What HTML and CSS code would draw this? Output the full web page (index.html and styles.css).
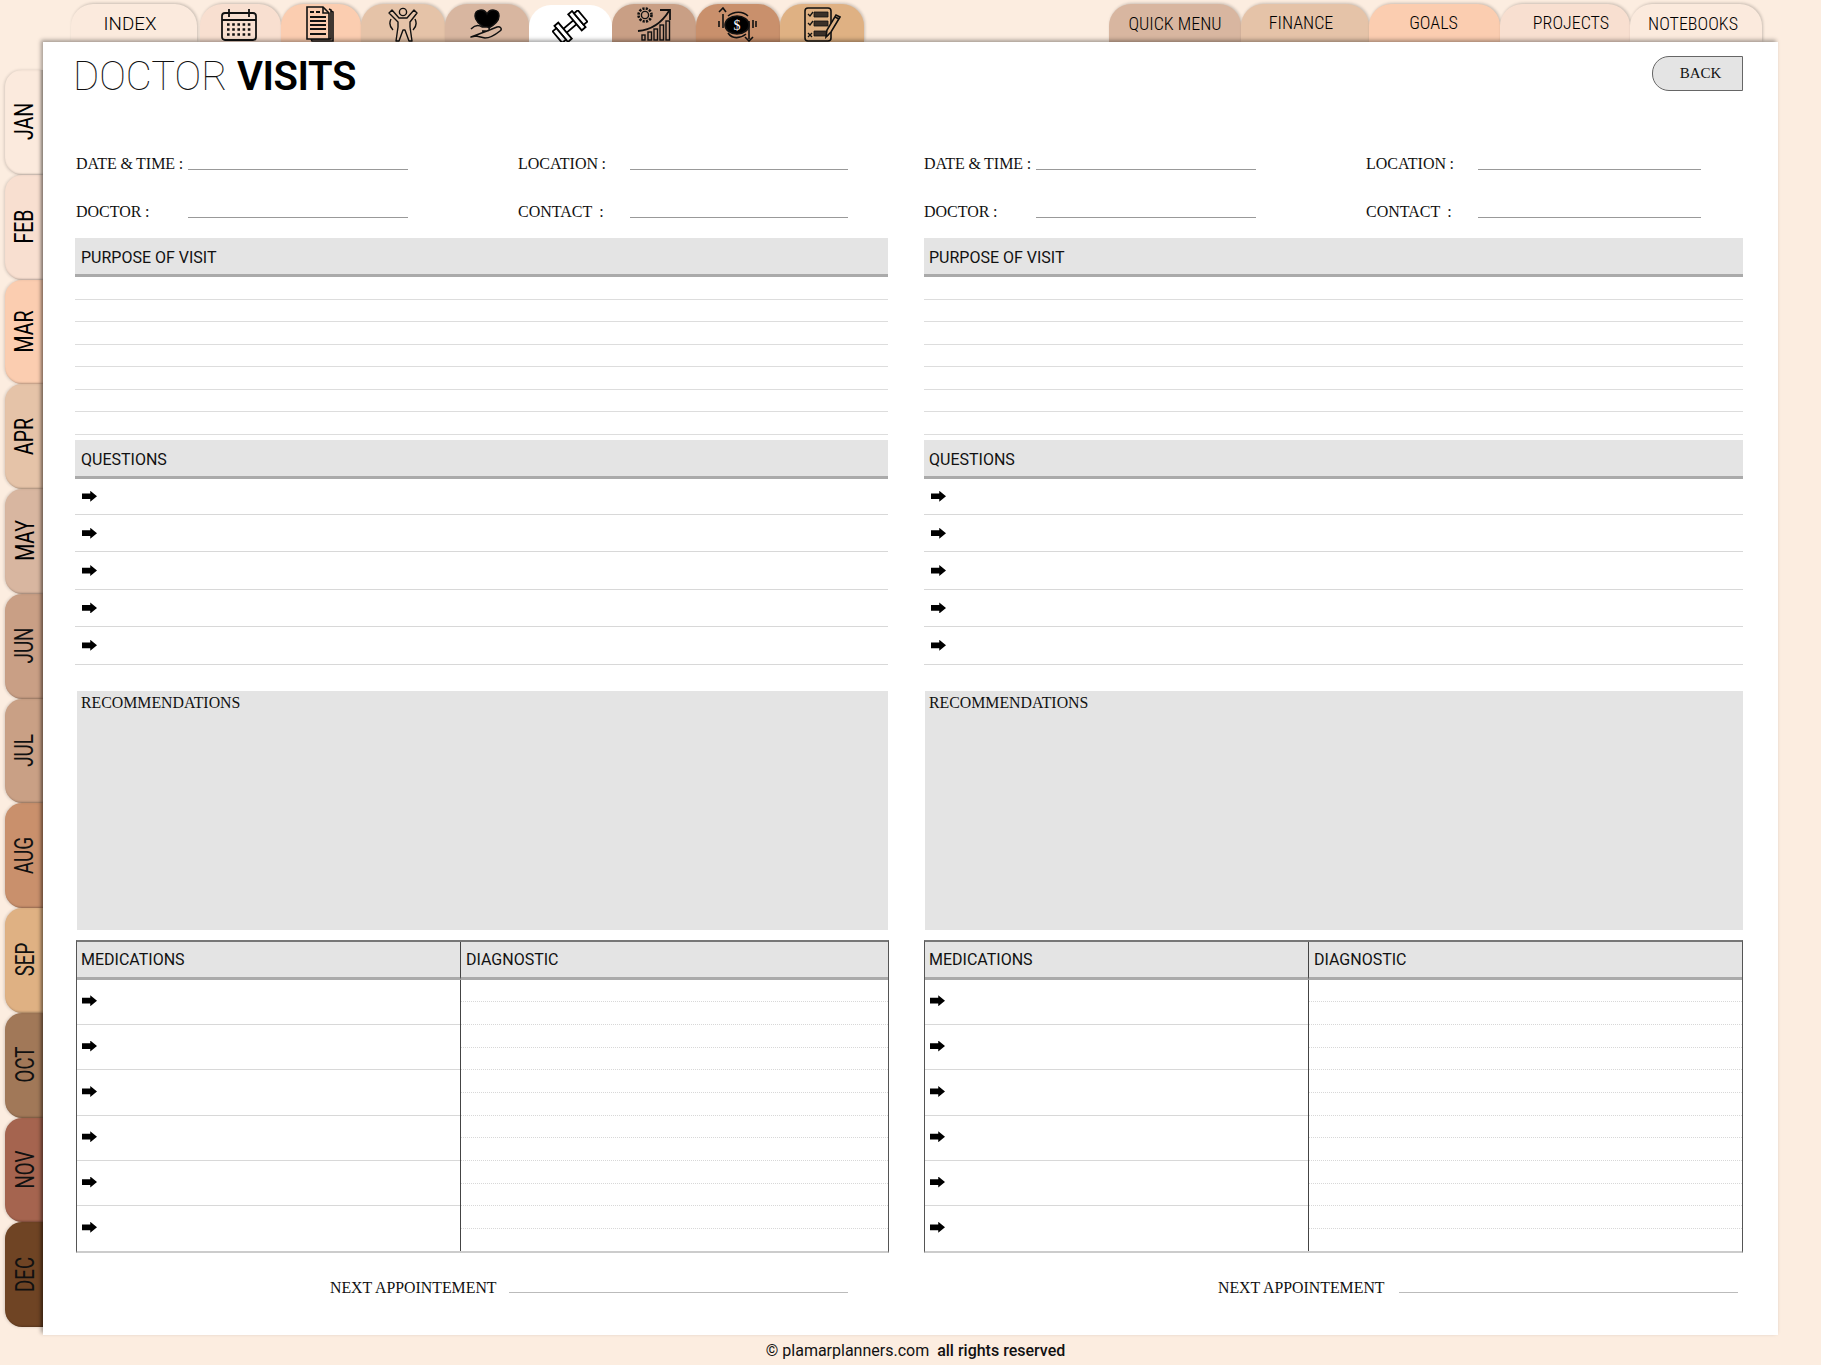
FILE: index.html
```html
<!DOCTYPE html>
<html lang="en">
<head>
  <meta charset="UTF-8">
  <meta name="viewport" content="width=device-width, initial-scale=1.0">
  <title>Doctor Visits</title>
  <link rel="stylesheet" href="styles.css">
</head>
<body>

  <div class="page">

    <nav class="topbar">
      <div class="tabs">
        <a class="tab tab-index c1">INDEX</a>
        <a class="tab tab-icon c2">
          <svg width="36" height="33" viewBox="0 0 36 33" fill="none" stroke="#111" stroke-width="1.8">
            <rect x="1" y="5" width="34" height="27" rx="3"/>
            <path d="M1 12h34M8 1v8M28 1v8"/>
            <g stroke-width="2.6" stroke-dasharray="2.6 2.6">
              <path d="M6 16.5h25M6 21.5h25M6 26.5h25"/>
            </g>
          </svg>
        </a>
        <a class="tab tab-icon c3">
          <svg width="28" height="36" viewBox="0 0 28 36" fill="none" stroke="#111" stroke-width="1.6">
            <path d="M25 5l2 1v29H6l-1-2"/>
            <path d="M23 3l2 1v29H5"/>
            <path d="M1 1h16l6 6v26H1z" fill="#fbcdb0"/>
            <path d="M17 1v6h6"/>
            <path d="M4 6h4M10 6h4M4 11h16M4 15h16M4 19h16M4 23h16M4 28h16" stroke-width="1.8"/>
          </svg>
        </a>
        <a class="tab tab-icon c4">
          <svg width="30" height="35" viewBox="0 0 30 35" fill="none" stroke="#111" stroke-width="1.4">
            <circle cx="15" cy="5" r="3.6"/>
            <path d="M1 6l3-3 7 8h8l7-8 3 3-7 9v5l2 14h-3l-4-11-2 0-4 11H8l2-14v-5z" stroke-linejoin="round"/>
            <path d="M3 12c-2 4-1 8 2 11M27 12c2 4 1 8-2 11"/>
          </svg>
        </a>
        <a class="tab tab-icon c5">
          <svg width="33" height="30" viewBox="0 0 33 30" fill="none" stroke="#111" stroke-width="1.5">
            <path d="M17 20C8 15 5 11 5 7c0-7 9-8 12-2 3-6 12-5 12 2 0 4-4 9-12 13z" fill="#000"/>
            <path d="M1 20c4-4 8-4 11-2h5c3 0 3 4 0 4h-5M17 22l10-4c3-1 6 2 3 4-5 4-10 7-15 7l-9-2-5 1z" stroke-linejoin="round" fill="#d8b6a0"/>
          </svg>
        </a>
        <a class="tab tab-icon tab-active">
          <svg width="36" height="33" viewBox="0 0 36 33" fill="none" stroke="#000" stroke-width="1.8">
            <g transform="rotate(-40 18 16.5)">
              <rect x="11" y="14" width="14" height="5"/>
              <rect x="6.5" y="6" width="5" height="21" fill="#fff"/>
              <rect x="1.5" y="9" width="5" height="15" fill="#fff"/>
              <rect x="24.5" y="6" width="5" height="21" fill="#fff"/>
              <rect x="29.5" y="9" width="5" height="15" fill="#fff"/>
            </g>
          </svg>
        </a>
        <a class="tab tab-icon c6">
          <svg width="36" height="34" viewBox="0 0 36 34" fill="none" stroke="#111" stroke-width="1.4">
            <circle cx="9" cy="8" r="6.5" stroke-dasharray="2.2 1.2" stroke-width="2.6"/>
            <circle cx="9" cy="8" r="3.6"/>
            <path d="M2 24c12-1 23-7 31-20" stroke-width="1.8"/>
            <path d="M24 3h10v10" stroke-width="1.8"/>
            <rect x="6" y="28" width="3" height="5"/>
            <rect x="12" y="25" width="3.5" height="8"/>
            <rect x="18" y="22" width="3.5" height="11"/>
            <rect x="24" y="18" width="3.5" height="15"/>
            <rect x="30" y="14" width="3.5" height="19"/>
          </svg>
        </a>
        <a class="tab tab-icon c7">
          <svg width="40" height="35" viewBox="0 0 40 35" fill="none" stroke="#111" stroke-width="1.6">
            <ellipse cx="20" cy="18" rx="12" ry="9" fill="#000"/>
            <text x="20" y="23" class="dollar">$</text>
            <path d="M6 7v14M2 5l4-4 3 4M2 14v6M11 9c6-5 15-5 20 0M29 27c-6 5-14 5-18-1"/>
            <path d="M32 14v18M28 30l4 4 4-4M36 13v8M39 14v6"/>
          </svg>
        </a>
        <a class="tab tab-icon c8">
          <svg width="37" height="35" viewBox="0 0 37 35" fill="none" stroke="#111" stroke-width="1.6">
            <rect x="1" y="1" width="26" height="33" rx="3"/>
            <path d="M4 7l2 2 3-4M4 16l2 2 3-4M4 26l4 4M8 26l-4 4" stroke-width="1.3"/>
            <path d="M10 5h14v5H10zM10 14h14v5H10zM10 24h14v5H10z" fill="#3b3028" stroke-width="0.8"/>
            <path d="M22 30l1-7 9-15 4 2-9 15z" fill="#dfb183"/>
            <path d="M31 10l4 2"/>
          </svg>
        </a>
      </div>
      <div class="tabs">
        <a class="tab tab-quick c5">QUICK MENU</a>
        <a class="tab tab-finance c4">FINANCE</a>
        <a class="tab tab-goals c3">GOALS</a>
        <a class="tab tab-projects c2">PROJECTS</a>
        <a class="tab tab-notebooks c1">NOTEBOOKS</a>
      </div>
    </nav>

    <aside class="months">
      <a class="month dark c1"><span>JAN</span></a>
      <a class="month dark c2"><span>FEB</span></a>
      <a class="month dark c3"><span>MAR</span></a>
      <a class="month dark c4"><span>APR</span></a>
      <a class="month dark c5"><span>MAY</span></a>
      <a class="month c6"><span>JUN</span></a>
      <a class="month c6b"><span>JUL</span></a>
      <a class="month c7"><span>AUG</span></a>
      <a class="month c8"><span>SEP</span></a>
      <a class="month c9"><span>OCT</span></a>
      <a class="month c10"><span>NOV</span></a>
      <a class="month c11"><span>DEC</span></a>
    </aside>

    <main class="sheet">
      <header class="sheet-head">
        <h1 class="title"><span class="thin">DOCTOR</span> VISITS</h1>
        <a class="back">BACK</a>
      </header>

      <div class="panels">

        <section class="panel">
          <div class="fields">
            <div class="field"><span class="lbl">DATE &amp; TIME :</span><span class="rule"></span></div>
            <div class="field"><span class="lbl">LOCATION :</span><span class="rule rule-2"></span></div>
            <div class="field"><span class="lbl">DOCTOR :</span><span class="rule"></span></div>
            <div class="field"><span class="lbl">CONTACT&nbsp; :</span><span class="rule rule-2"></span></div>
          </div>

          <div class="bar">PURPOSE OF VISIT</div>
          <div class="lines">
            <div></div><div></div><div></div><div></div><div></div><div></div><div></div>
          </div>

          <div class="bar">QUESTIONS</div>
          <div class="questions">
            <div><i class="arrow"></i></div>
            <div><i class="arrow"></i></div>
            <div><i class="arrow"></i></div>
            <div><i class="arrow"></i></div>
            <div><i class="arrow"></i></div>
          </div>

          <div class="notes">RECOMMENDATIONS</div>

          <div class="grid-box">
            <div class="grid-head">MEDICATIONS</div>
            <div class="grid-head grid-divider">DIAGNOSTIC</div>
            <div class="meds">
              <div><i class="arrow"></i></div>
              <div><i class="arrow"></i></div>
              <div><i class="arrow"></i></div>
              <div><i class="arrow"></i></div>
              <div><i class="arrow"></i></div>
              <div><i class="arrow"></i></div>
            </div>
            <div class="diag grid-divider">
              <div></div><div></div><div></div><div></div><div></div><div></div>
              <div></div><div></div><div></div><div></div><div></div><div></div>
            </div>
          </div>

          <div class="next"><span class="lbl-next">NEXT APPOINTEMENT</span><span class="rule-next"></span></div>
        </section>

        <section class="panel panel-right">
          <div class="fields">
            <div class="field"><span class="lbl">DATE &amp; TIME :</span><span class="rule"></span></div>
            <div class="field"><span class="lbl">LOCATION :</span><span class="rule rule-2"></span></div>
            <div class="field"><span class="lbl">DOCTOR :</span><span class="rule"></span></div>
            <div class="field"><span class="lbl">CONTACT&nbsp; :</span><span class="rule rule-2"></span></div>
          </div>

          <div class="bar">PURPOSE OF VISIT</div>
          <div class="lines">
            <div></div><div></div><div></div><div></div><div></div><div></div><div></div>
          </div>

          <div class="bar">QUESTIONS</div>
          <div class="questions">
            <div><i class="arrow"></i></div>
            <div><i class="arrow"></i></div>
            <div><i class="arrow"></i></div>
            <div><i class="arrow"></i></div>
            <div><i class="arrow"></i></div>
          </div>

          <div class="notes">RECOMMENDATIONS</div>

          <div class="grid-box">
            <div class="grid-head">MEDICATIONS</div>
            <div class="grid-head grid-divider">DIAGNOSTIC</div>
            <div class="meds">
              <div><i class="arrow"></i></div>
              <div><i class="arrow"></i></div>
              <div><i class="arrow"></i></div>
              <div><i class="arrow"></i></div>
              <div><i class="arrow"></i></div>
              <div><i class="arrow"></i></div>
            </div>
            <div class="diag grid-divider">
              <div></div><div></div><div></div><div></div><div></div><div></div>
              <div></div><div></div><div></div><div></div><div></div><div></div>
            </div>
          </div>

          <div class="next"><span class="lbl-next">NEXT APPOINTEMENT</span><span class="rule-next"></span></div>
        </section>

      </div>
    </main>

    <footer class="foot">© plamarplanners.com&nbsp; <b>all rights reserved</b></footer>

  </div>

</body>
</html>
```

FILE: styles.css
```css
html, body {
  margin: 0;
  padding: 0;
}

body {
  background-color: #fcede0;
  font-family: 'Liberation Serif', serif;
  color: #111;
}

.page {
  width: 1821px;
  height: 1365px;
  display: grid;
  grid-template-columns: 43px 1735px 43px;
  grid-template-rows: 42px 1293px 30px;
  overflow: hidden;
}

/* colours shared by top and side tabs */
.c1 { background-color: #fbeadd; }
.c2 { background-color: #f8dfd0; }
.c3 { background-color: #fbcdb0; }
.c4 { background-color: #e5c3a8; }
.c5 { background-color: #d8b6a0; }
.c6 { background-color: #c99f85; }
.c6b { background-color: #c9a085; }
.c7 { background-color: #c9906c; }
.c8 { background-color: #dfb183; }
.c9 { background-color: #a17858; }
.c10 { background-color: #a5644f; }
.c11 { background-color: #6f4424; }

/* top tabs */
.topbar {
  grid-column: 1 / 4;
  grid-row: 1;
  display: flex;
  justify-content: space-between;
  align-items: flex-end;
  padding: 0 59px 0 71px;
  position: relative;
  z-index: 1;
}

.tabs {
  display: flex;
  align-items: flex-end;
}

.tab {
  height: 38px;
  box-sizing: border-box;
  display: flex;
  justify-content: center;
  align-items: center;
  border-radius: 22px 22px 0 0;
  box-shadow: 1px -1px 3px rgba(0, 0, 0, 0.2);
  font-family: 'Roboto', sans-serif;
  font-weight: 300;
  font-size: 18px;
  color: #000;
  white-space: nowrap;
}

.tab-index { width: 126px; margin-right: 3px; padding: 2px 8px 0 0; font-size: 18.8px; }
.tab-icon { width: 81px; padding-top: 2px; overflow: hidden; }
.c2.tab-icon { padding-right: 3px; }
.c3.tab-icon { width: 80px; padding-right: 2px; }
.c4.tab-icon { width: 84px; padding-right: 1px; }
.c5.tab-icon { width: 84px; padding-right: 2px; }
.c6.tab-icon { width: 84px; }
.c7.tab-icon { width: 84px; padding-right: 2px; }
.c8.tab-icon { width: 84px; }

.tab-active {
  width: 83px;
  height: 40px;
  margin-bottom: -3px;
  padding-right: 2px;
  background-color: #fff;
  position: relative;
  z-index: 3;
  box-shadow: none;
}

.tab-quick, .tab-finance, .tab-goals, .tab-projects, .tab-notebooks {
  font-size: 18px;
  font-stretch: condensed;
}

.tab-quick { width: 132px; }
.tab-finance { width: 128px; padding: 0 8px 2px 0; }
.tab-goals { width: 131px; padding: 0 2px 2px 0; }
.tab-projects { width: 130px; padding: 0 0 2px 12px; }
.tab-notebooks { width: 132px; padding-right: 6px; }

/* month tabs */
.months {
  grid-column: 1;
  grid-row: 2;
  display: flex;
  flex-direction: column;
  padding: 28px 0 0 5px;
  position: relative;
  z-index: 0;
}

.month {
  height: 104.75px;
  flex: none;
  padding: 0 0 1px 2px;
  box-sizing: border-box;
  border-radius: 17px 0 0 17px;
  box-shadow: -1px 0 3px rgba(0, 0, 0, 0.15), inset -3px 0 3px -1px rgba(0, 0, 0, 0.22), inset 0 -2px 2px -1px rgba(0, 0, 0, 0.18);
  display: flex;
  justify-content: center;
  align-items: center;
}

.month span {
  display: block;
  font-family: 'Roboto', sans-serif;
  font-size: 25px;
  color: #111;
  transform: rotate(-90deg) scaleX(0.75);
}

.month.dark span {
  color: #000;
  transform: rotate(-90deg) scaleX(0.78);
}

/* page */
.sheet {
  grid-column: 2;
  grid-row: 2;
  background-color: #fff;
  box-shadow: -2px -2px 4px rgba(0, 0, 0, 0.35);
  padding: 0 35px 0 32px;
  position: relative;
  z-index: 2;
}

.sheet-head {
  height: 82px;
  display: flex;
  justify-content: space-between;
  align-items: flex-start;
}

.title {
  margin: 12px 0 0 -2px;
  font-family: 'Roboto', sans-serif;
  font-weight: 600;
  font-size: 40px;
  line-height: 46px;
  letter-spacing: -0.4px;
  color: #000;
}

.title .thin {
  font-weight: 100;
  letter-spacing: 0;
  color: #111;
}

.back {
  margin-top: 14px;
  width: 91px;
  height: 35px;
  box-sizing: border-box;
  padding-left: 6px;
  display: flex;
  justify-content: center;
  align-items: center;
  background-color: #e4e4e4;
  border: 1px solid #666;
  border-radius: 17px 0 0 17px;
  font-size: 15px;
}

.panels {
  display: grid;
  grid-template-columns: 813px 819px;
  column-gap: 36px;
}

/* top fields */
.fields {
  display: grid;
  grid-template-columns: 443px 1fr;
  margin-bottom: 18px;
}

.panel-right .fields {
  grid-template-columns: 442px 1fr;
}

.field {
  height: 48px;
  display: flex;
  align-items: flex-end;
}

.field:nth-child(odd) {
  padding-left: 1px;
}

.panel-right .field:nth-child(odd) {
  padding-left: 0;
}

.lbl {
  width: 112px;
  flex: none;
  margin-bottom: -1px;
  font-size: 16px;
  line-height: 18px;
  word-spacing: -0.5px;
  white-space: nowrap;
}

.rule {
  width: 220px;
  height: 1px;
  margin-bottom: 2px;
  background-color: #999;
}

.rule-2 { width: 218px; }
.panel-right .rule-2 { width: 223px; }

/* section headers */
.bar {
  height: 39px;
  box-sizing: border-box;
  padding: 3px 5px 0 6px;
  display: flex;
  align-items: center;
  background-color: #e4e4e4;
  border-bottom: 3px solid #aaa;
  font-family: 'Roboto', sans-serif;
  font-size: 16px;
  color: #111;
}

.panel-right .bar {
  padding-left: 5px;
}

.lines {
  margin-bottom: 5px;
}

.lines div {
  height: 22.5px;
  box-sizing: border-box;
  border-bottom: 1px solid #ddd;
}

.questions div {
  height: 37.4px;
  box-sizing: border-box;
  display: flex;
  align-items: center;
  padding-left: 7px;
  border-bottom: 1px solid #d8d8d8;
}

.questions div:first-child {
  height: 36.5px;
}

.arrow {
  display: block;
  width: 15px;
  height: 11px;
  background-color: #000;
  clip-path: polygon(0 24%, 55% 24%, 55% 0, 100% 50%, 55% 100%, 55% 76%, 0 76%);
}

.notes {
  margin: 26px 0 0 2px;
  height: 239px;
  box-sizing: border-box;
  padding: 3px 4px;
  background-color: #e4e4e4;
  font-size: 15.85px;
  line-height: 18px;
}

.panel-right .notes {
  margin-left: 1px;
}

/* medications / diagnostic box */
.grid-box {
  margin: 10px -1px 0 1px;
  height: 313px;
  box-sizing: border-box;
  display: grid;
  grid-template-columns: 383px 1fr;
  grid-template-rows: 38px 1fr;
  border: 1px solid #555;
  border-top: 2px solid #777;
  border-bottom: 2px solid #ccc;
}

.panel-right .grid-box {
  margin: 10px 0 0;
}

.grid-head {
  padding: 1px 4px 0 4px;
  display: flex;
  align-items: center;
  background-color: #e4e4e4;
  border-bottom: 3px solid #aaa;
  font-family: 'Roboto', sans-serif;
  font-size: 16px;
}

.grid-head.grid-divider {
  padding-left: 5px;
}

.grid-divider {
  border-left: 1px solid #444;
}

.meds, .diag {
  display: flex;
  flex-direction: column;
}

.meds div {
  flex: 1;
  display: flex;
  align-items: center;
  padding: 0 0 2px 5px;
  border-bottom: 1px solid #d8d8d8;
}

.meds div:last-child {
  border-bottom: none;
}

.diag div {
  flex: 1;
  border-bottom: 1px dotted #d8d8d8;
}

.diag div:last-child {
  border-bottom: none;
}

/* next appointment */
.next {
  margin-top: 26px;
  padding-left: 255px;
  display: flex;
  align-items: flex-end;
}

.panel-right .next {
  padding-left: 294px;
}

.lbl-next {
  width: 179px;
  flex: none;
  font-size: 15.85px;
  line-height: 18px;
  white-space: nowrap;
}

.panel-right .lbl-next {
  width: 181px;
}

.rule-next {
  width: 339px;
  height: 1px;
  margin-bottom: 4px;
  background-color: #bbb;
}

/* footer */
.foot {
  grid-column: 1 / 4;
  grid-row: 3;
  padding-left: 10px;
  display: flex;
  justify-content: center;
  align-items: center;
  font-family: 'Roboto', sans-serif;
  font-size: 16px;
  color: #111;
  white-space: pre;
}

.foot b {
  font-weight: 500;
}

.dollar {
  font-family: 'Liberation Serif', serif;
  font-size: 14px;
  fill: #fff;
  stroke: none;
  text-anchor: middle;
}
```
